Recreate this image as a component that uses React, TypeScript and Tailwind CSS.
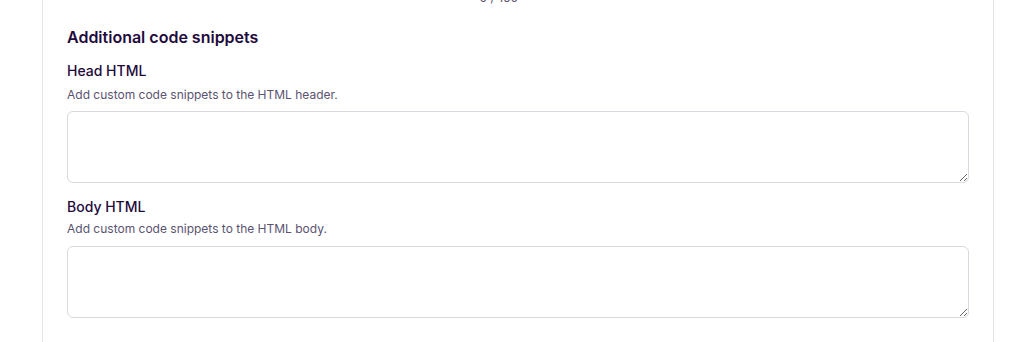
export default function App() {
  return (
    <div className="min-h-screen bg-white font-['Inter',sans-serif] text-[#1e0a3c]">
      <div className="mx-[42px] w-[952px] border-x border-[#e4e3e8] px-6 pb-10">
        <div className="-mt-2.5 flex">
          <div className="w-[451px] text-right text-xs leading-4 text-[#5a5370]">0 / 150</div>
        </div>
        <h2 className="mt-[19px] text-base leading-6 font-semibold">Additional code snippets</h2>
        <div className="mt-3 flex flex-col">
          <label className="text-sm leading-5 font-medium">Head HTML</label>
          <p className="mt-1.5 text-xs leading-4 text-[#5a5370]">Add custom code snippets to the HTML header.</p>
          <textarea className="mt-2 h-[72px] w-full rounded-md border border-[#d9d8de] bg-white px-3 py-2 text-sm outline-none" />
        </div>
        <div className="mt-3.5 flex flex-col">
          <label className="text-sm leading-5 font-medium">Body HTML</label>
          <p className="mt-1 text-xs leading-4 text-[#5a5370]">Add custom code snippets to the HTML body.</p>
          <textarea className="mt-[9px] h-[72px] w-full rounded-md border border-[#d9d8de] bg-white px-3 py-2 text-sm outline-none" />
        </div>
      </div>
    </div>
  );
}
